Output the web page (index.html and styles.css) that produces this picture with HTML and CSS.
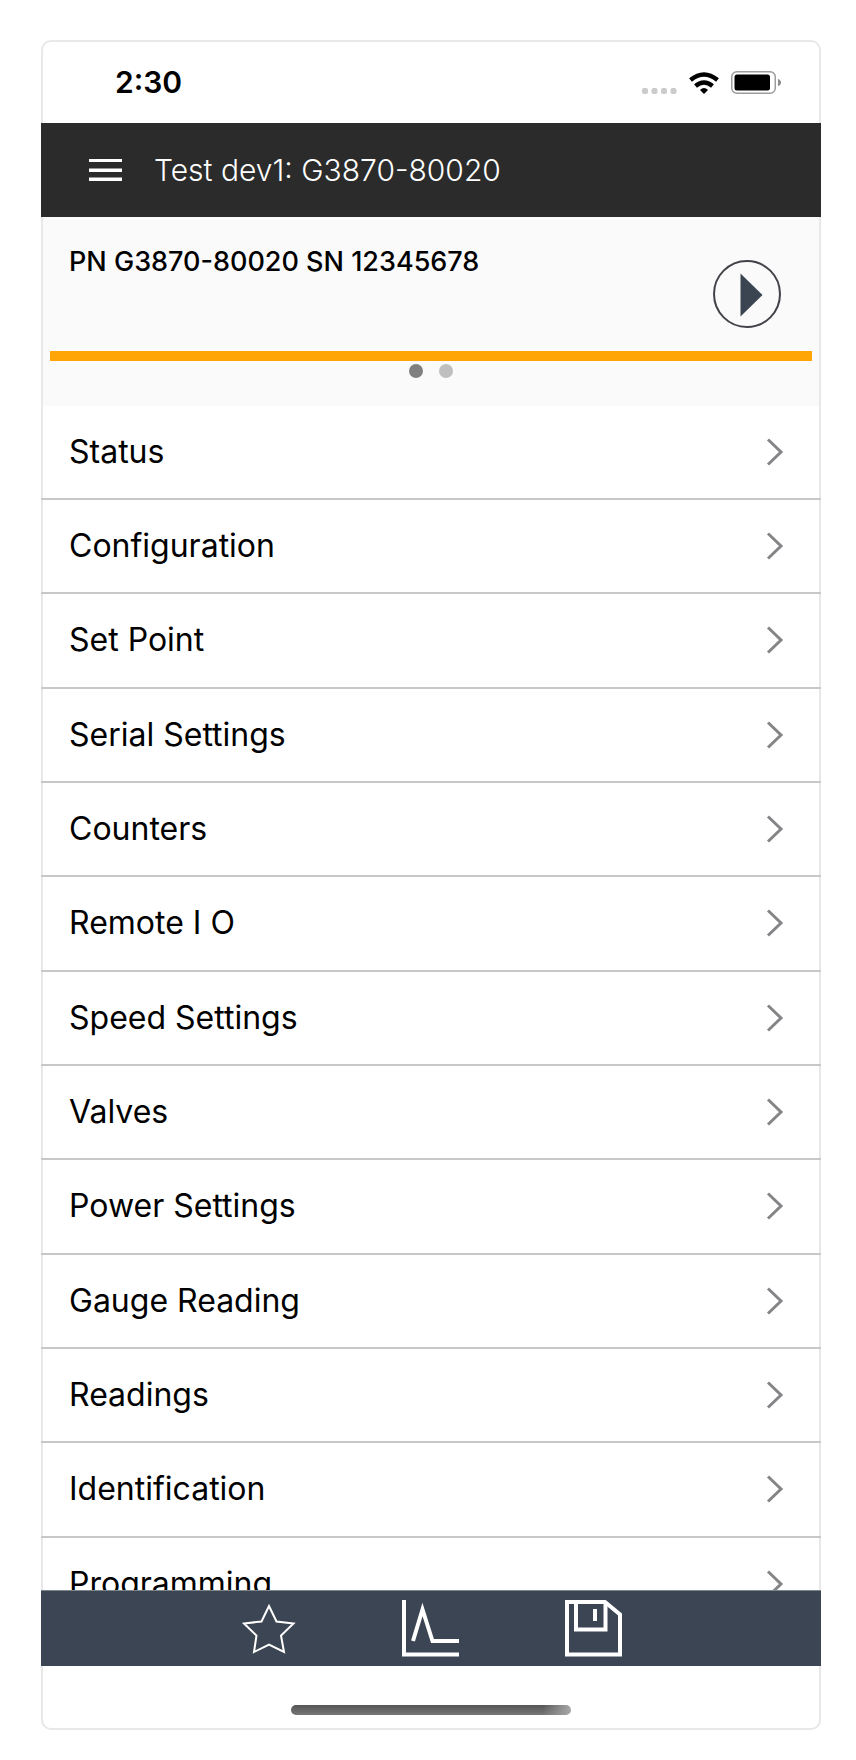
FILE: index.html
```html
<!DOCTYPE html>
<html lang="en">
<head>
<meta charset="utf-8">
<meta name="viewport" content="width=device-width, initial-scale=1">
<title>Test dev1: G3870-80020</title>
<link rel="stylesheet" href="styles.css">
</head>
<body>
<svg class="sprite" aria-hidden="true">
  <symbol id="chevron" viewBox="0 0 18 30"><path d="M2 2.500 15 15 2 27.500" fill="none" stroke="#858588" stroke-width="3"/></symbol>
</svg>
<div class="phone">
  <div class="status-bar">
    <span class="clock">2:30</span>
    <div class="indicators">
      <svg class="signal" viewBox="0 0 35 6" fill="#cbcbcb"><rect width="6" height="6" rx="2"/><rect x="9.500" width="6" height="6" rx="2"/><rect x="19" width="6" height="6" rx="2"/><rect x="28.500" width="6" height="6" rx="2"/></svg>
      <svg class="wifi" viewBox="0 0 30 22"><g fill="none" stroke="#000" stroke-width="4.500"><path d="M1.500 8Q15-3 28.500 8"/><path d="M6.500 14Q15 7 23.500 14"/></g><path d="M11 18Q15 14 19 18L15 22Z"/></svg>
      <svg class="battery" viewBox="0 0 50 23"><rect x=".75" y=".75" width="43.500" height="21.500" rx="5" fill="none" stroke="#9c9c9c" stroke-width="1.500"/><rect x="3.500" y="3.500" width="35.500" height="16" rx="2.500"/><path d="M47 8q3 1 3 3.500T47 15Z" fill="#8b8b8b"/></svg>
    </div>
  </div>
  <header class="app-header">
    <button class="icon-button" type="button" aria-label="Menu"><svg class="menu-icon" viewBox="0 0 33 22" fill="#fff"><path d="M0 0h33v3H0zM0 9.500h33v3.500H0zM0 18.500h33v3.500H0z"/></svg></button>
    <h1 class="title">Test dev1: G3870-80020</h1>
  </header>
  <section class="device">
    <div class="device-info">
      <h2 class="device-name">PN G3870-80020 SN 12345678</h2>
      <button class="icon-button play" type="button" aria-label="Start"><svg class="play-icon" viewBox="0 0 68 68"><circle cx="34" cy="34" r="33" fill="none" stroke="#414349" stroke-width="2"/><path d="M27.500 13.500 49.500 35 27.500 56.500Z" fill="#3b4451"/></svg></button>
    </div>
    <div class="pager"><span class="dot dot-active"></span><span class="dot"></span></div>
  </section>
  <nav class="menu">
    <ul class="menu-list">
      <li><a class="row" href="#status">Status<svg class="chevron"><use href="#chevron"/></svg></a></li>
      <li><a class="row" href="#configuration">Configuration<svg class="chevron"><use href="#chevron"/></svg></a></li>
      <li><a class="row" href="#set-point">Set Point<svg class="chevron"><use href="#chevron"/></svg></a></li>
      <li><a class="row" href="#serial">Serial Settings<svg class="chevron"><use href="#chevron"/></svg></a></li>
      <li><a class="row" href="#counters">Counters<svg class="chevron"><use href="#chevron"/></svg></a></li>
      <li><a class="row" href="#remote">Remote I O<svg class="chevron"><use href="#chevron"/></svg></a></li>
      <li><a class="row" href="#speed">Speed Settings<svg class="chevron"><use href="#chevron"/></svg></a></li>
      <li><a class="row" href="#valves">Valves<svg class="chevron"><use href="#chevron"/></svg></a></li>
      <li><a class="row" href="#power">Power Settings<svg class="chevron"><use href="#chevron"/></svg></a></li>
      <li><a class="row" href="#gauge">Gauge Reading<svg class="chevron"><use href="#chevron"/></svg></a></li>
      <li><a class="row" href="#readings">Readings<svg class="chevron"><use href="#chevron"/></svg></a></li>
      <li><a class="row" href="#identification">Identification<svg class="chevron"><use href="#chevron"/></svg></a></li>
      <li><a class="row" href="#programming">Programming<svg class="chevron"><use href="#chevron"/></svg></a></li>
    </ul>
  </nav>
  <footer class="toolbar">
    <button class="icon-button" type="button" aria-label="Favorites"><svg class="star-icon" viewBox="0 0 54 50"><path d="M27 2 34.500 17.500 51.500 19.500 39 31.500 42 48 27 40.500 12 48 14.500 31.500 2 19.500 19.500 17.500Z" fill="none" stroke="#fff" stroke-width="2"/></svg></button>
    <button class="icon-button" type="button" aria-label="Chart"><svg class="tool-icon" viewBox="0 0 57 57"><g fill="none" stroke="#fff" stroke-width="4"><path d="M2 0V54.500H57"/><path d="M11 41 20.500 9.500 30.500 41H57"/></g></svg></button>
    <button class="icon-button" type="button" aria-label="Save"><svg class="tool-icon" viewBox="0 0 57 57"><g fill="none" stroke="#fff" stroke-width="4"><path d="M2 2H40L55 14.500V54.500H2Z"/><path d="M11 2V29.500H40.500V2"/><path d="M30 9V21"/></g></svg></button>
  </footer>
  <div class="home-area"><span class="home-indicator"></span></div>
</div>
</body>
</html>
```
FILE: styles.css
```css
* { box-sizing: border-box; }

body {
  margin: 0;
  height: 100vh;
  padding: 40px 35px 30px 41px;
  background: #fff;
  color: #000;
  font-family: Inter, "Liberation Sans", sans-serif;
}

.sprite { display: none; }
svg { display: block; }

.phone {
  display: flex;
  flex-direction: column;
  height: 100%;
  border-radius: 10px;
  box-shadow: inset 0 0 0 2px #e8e8e8;
}

.status-bar {
  display: flex;
  align-items: center;
  justify-content: space-between;
  padding: 24px 40px 22px 74px;
}

.clock {
  font-size: 30px;
  font-weight: 600;
  line-height: 37px;
}

.indicators { display: flex; align-items: flex-end; gap: 12px; }
.signal { width: 35px; height: 6px; }
.wifi { width: 30px; height: 22px; }
.battery { width: 50px; height: 23px; }

.icon-button {
  display: block;
  flex: none;
  padding: 0;
  border: 0;
  background: none;
  cursor: pointer;
}

.app-header {
  display: flex;
  align-items: center;
  gap: 32px;
  padding: 28px 48px;
  background: #2b2b2b;
  color: #fff;
}

.menu-icon { width: 33px; height: 22px; }

.title {
  margin: 0;
  font-size: 30px;
  font-weight: 300;
  line-height: 38px;
}

.device {
  margin: 0 2px;
  padding: 0 7px 28px;
  background: #fafafa;
}

.device-info {
  display: flex;
  justify-content: space-between;
  padding: 28px 31px 23px 19px;
  border-bottom: 10px solid #ffa505;
}

.device-name {
  margin: 0;
  font-size: 27px;
  font-weight: 500;
  line-height: 34px;
}

.play { padding: 15px 0 0; }
.play-icon { width: 68px; height: 68px; }

.pager { display: flex; justify-content: center; gap: 16px; padding-top: 3px; }
.dot { width: 14px; height: 14px; border-radius: 50%; background: #bfbfbf; }
.dot-active { background: #808080; }

.menu { flex: 1 1 0; min-height: 0; overflow-y: auto; scrollbar-width: none; }
.menu-list { margin: 0; padding: 0; list-style: none; }
.menu-list li { border-bottom: 2px solid #c8c8ca; }
.menu-list li:nth-child(3n) { padding-bottom: 1px; }

.row {
  display: flex;
  align-items: center;
  justify-content: space-between;
  padding: 26px 37px 26px 28px;
  color: inherit;
  font-size: 32px;
  line-height: 40px;
  text-decoration: none;
}

.chevron { width: 18px; height: 30px; }

.toolbar {
  display: flex;
  align-items: center;
  justify-content: center;
  gap: 106px;
  padding: 9px 0 9px 2px;
  border-top: 1px solid #7d8688;
  background: #3c4553;
}

.star-icon { width: 54px; height: 50px; }
.tool-icon { width: 57px; height: 57px; }

.home-area { display: flex; justify-content: center; padding: 39px 0 15px; }

.home-indicator {
  width: 36%;
  height: 10px;
  border-radius: 5px;
  background:
    linear-gradient(90deg, transparent 90%, #a8a8a8),
    linear-gradient(#555, #777);
}
```
